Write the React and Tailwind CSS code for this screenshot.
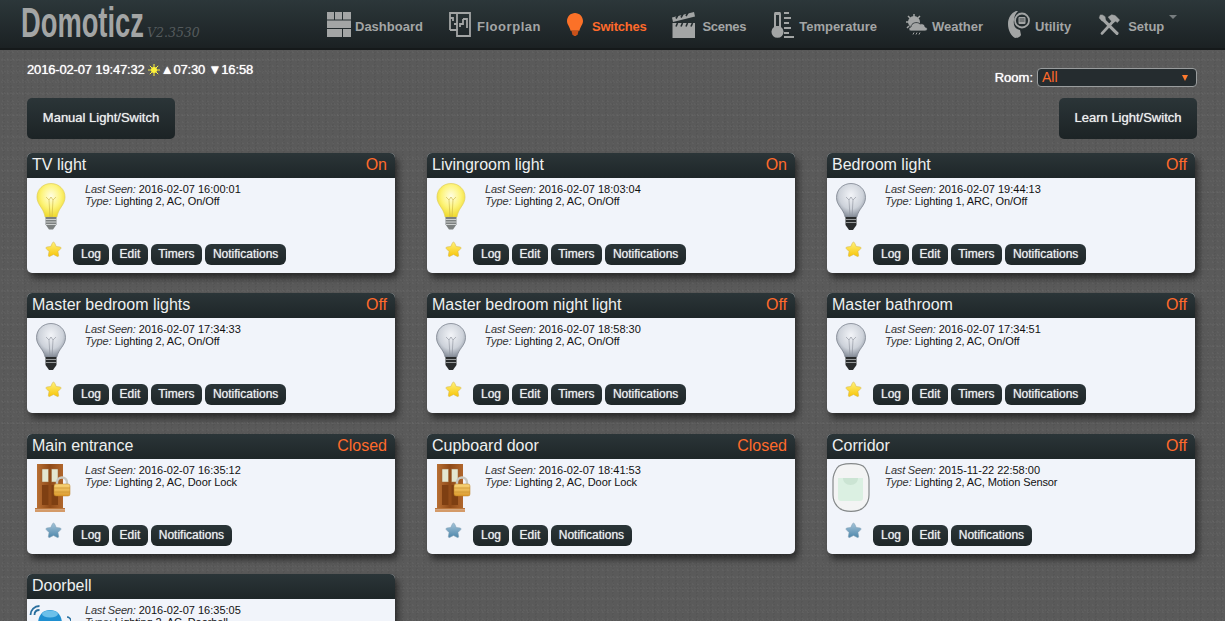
import React from "react";

const grey = "#a3a5a5";

// nav icons, drawn to match the png sprites of the original
const DashboardIcon = () => (
  <svg width="24" height="25" viewBox="0 0 24 25" fill={grey}>
    <rect x="0" y="0" width="7" height="7.5" />
    <rect x="8" y="0" width="7" height="7.5" />
    <rect x="16" y="0" width="8" height="7.5" />
    <rect x="0" y="8.5" width="24" height="7.5" />
    <rect x="0" y="17" width="15" height="8" />
    <rect x="16" y="17" width="8" height="8" />
  </svg>
);

const FloorplanIcon = () => (
  <svg width="22" height="25" viewBox="0 0 22 25" fill="none" stroke={grey} strokeWidth="1.8">
    <path d="M1 18V1h20v23H8v-6H1" />
    <path d="M1 6h3v3M8 1v11H5M8 18v-5M14 7h4v9M14 7v5h-3v3" />
  </svg>
);

const SwitchesIcon = () => (
  <svg className="mx-px" width="16" height="25" viewBox="0 0 18 26">
    <path d="M9 0c5 0 9 4 9 9 0 4-3 6-4 11H4C3 15 0 13 0 9c0-5 4-9 9-9z" fill="#fb7128" />
    <path d="M5 20h8l-1 4-2 2H8l-2-2z" fill="#c9511a" />
  </svg>
);

const ScenesIcon = () => (
  <svg width="25" height="27" viewBox="0 0 25 27" fill={grey}>
    <path d="M1 6.500 23 1l1 4.500L2 11z" />
    <path d="M1.500 12H24v15H1.500z" />
    <path d="M5 7.500 7 4M10 6.500l2-3.500M15 5l2-3.500" stroke="#232b2e" strokeWidth="1.600" />
    <path d="M5 15.500 6.500 12M10 15.500l1.500-3.500M15 15.500l1.500-3.500M20 15.500l1.500-3.500" stroke="#232b2e" strokeWidth="1.600" />
  </svg>
);

const TemperatureIcon = () => (
  <svg width="24" height="26" viewBox="0 0 24 26" fill={grey}>
    <path fillRule="evenodd" d="M3 2.500a3.500 3.500 0 0 1 7 0v12.500a6 6 0 1 1-7 0zM5 3v11h3V3z" />
    <rect x="13" y="0" width="5" height="2" />
    <rect x="13" y="5" width="7" height="2" />
    <rect x="13" y="10" width="5" height="2" />
    <rect x="13" y="15" width="7" height="2" />
    <rect x="13" y="20" width="5" height="2" />
    <rect x="13" y="24" width="10" height="2" />
  </svg>
);

const WeatherIcon = () => (
  <svg width="23" height="21" viewBox="0 0 23 21" fill={grey}>
    <circle cx="9" cy="8" r="6" />
    <path d="M9 0v3M1 8h3M3 2l2 2M15 2l-2 2M2 14l2-2" stroke={grey} strokeWidth="1.500" />
    <path d="M6 17c-2.500 0-3-4 0-4 0-4 6-6 9-3 3-1 5 1 5 3 3 0 3 4 0 4z" stroke="#232b2e" strokeWidth="0.800" />
    <path d="M9 18.500l-1 2M12 18.500l-1 2M15 18.500l-1 2" stroke={grey} strokeWidth="1" />
  </svg>
);

const UtilityIcon = () => (
  <svg width="22" height="27" viewBox="0 0 22 27" fill={grey}>
    <path d="M8 0C3 2 0 7 0 13c0 6 3 12 7 14 3 0 5-1 6-3l-1-5C7 18 5 14 6 9c0-4 2-7 4-9z" />
    <circle cx="14" cy="9.500" r="7" fill="none" stroke={grey} strokeWidth="1.800" />
    <rect x="10.500" y="6" width="7" height="7" rx="1" />
    <path d="M11.500 8h5M11.500 10h5" stroke="#232b2e" strokeWidth="0.800" />
  </svg>
);

const SetupIcon = () => (
  <svg width="25" height="22" viewBox="0 0 25 25" fill="none" stroke={grey}>
    <path d="M5 6 21 22" strokeWidth="3.600" strokeLinecap="round" />
    <path d="M4.500 1 2 1 .8 4.500 4 8l4-1-.500-4z" fill={grey} strokeWidth="0.500" />
    <path d="M4 22 17 8" strokeWidth="3.200" strokeLinecap="round" />
    <path d="M11 3.500 15 .8l4 1 5 5-2.500 3-2-1.500-3 1.500-3-3z" fill={grey} strokeWidth="0.500" />
  </svg>
);

const navItems = [
  { label: "Dashboard", icon: <DashboardIcon />, cls: "gap-[4px] mr-px" },
  { label: "Floorplan", icon: <FloorplanIcon />, cls: "gap-[6px]", text: "tracking-[0.55px]" },
  { label: "Switches", icon: <SwitchesIcon />, cls: "gap-[8px]", text: "tracking-[-0.25px]", active: true },
  { label: "Scenes", icon: <ScenesIcon />, cls: "gap-[6px]", text: "tracking-[-0.3px]" },
  { label: "Temperature", icon: <TemperatureIcon />, cls: "gap-[4px] mr-[3px]" },
  { label: "Weather", icon: <WeatherIcon />, cls: "gap-[4px]" },
  { label: "Utility", icon: <UtilityIcon />, cls: "gap-[5px] mr-px" },
  { label: "Setup", icon: <SetupIcon />, cls: "gap-[6px]" },
];

// device pictures
const BulbOn = ({ id }) => (
  <svg width="30" height="48" viewBox="0 0 30 48">
    <defs>
      <radialGradient id={id} cx="50%" cy="38%" r="62%">
        <stop offset="0%" stopColor="#fffee4" />
        <stop offset="55%" stopColor="#fdf47c" />
        <stop offset="100%" stopColor="#efd92a" />
      </radialGradient>
    </defs>
    <path d="M15 .5C7 .5 1 6.500 1 14c0 7 5 10 7 16 .5 1.500 1 3 1 4h12c0-1 .5-2.500 1-4 2-6 7-9 7-16C29 6.500 23 .5 15 .5z" fill={`url(#${id})`} stroke="#e0ce5a" strokeWidth="0.700" />
    <path d="M10 14l3 3 2-3 2 3 3-3M13 17l1 17M17 17l-1 17" fill="none" stroke="#c9b244" strokeWidth="0.600" />
    <path d="M9.500 34h11v7.500L17 46.500h-4l-3.500-5z" fill="#7c8080" />
    <path d="M9.500 36.500h11M9.500 39h11M10 41.500h10" stroke="#d6d8d8" strokeWidth="0.900" />
  </svg>
);

const BulbOff = ({ id }) => (
  <svg width="30" height="48" viewBox="0 0 30 48">
    <defs>
      <radialGradient id={id} cx="50%" cy="35%" r="68%">
        <stop offset="0%" stopColor="#f2f4f8" />
        <stop offset="60%" stopColor="#cdd2da" />
        <stop offset="100%" stopColor="#7c8490" />
      </radialGradient>
    </defs>
    <path d="M15 .5C7 .5 .5 6.500 .5 14.500c0 7 5 10 7.500 16 .5 1.500 1 3 1 3.500h12c0-.5.5-2 1-3.500 2.500-6 7.500-9 7.500-16C29.500 6.500 23 .5 15 .5z" fill={`url(#${id})`} stroke="#7f8590" strokeWidth="0.800" />
    <path d="M10 14l3 3 2-3 2 3 3-3M13 17l1 17M17 17l-1 17" fill="none" stroke="#8a8f98" strokeWidth="0.600" />
    <path d="M9.500 34h11v8L17 47h-4l-3.500-5z" fill="#2a2c2d" />
    <path d="M9.500 36.500h11M9.500 39.500h11" stroke="#a5a8a9" strokeWidth="0.900" />
  </svg>
);

const DoorLock = ({ id }) => (
  <svg width="36" height="48" viewBox="0 0 36 48">
    <defs>
      <linearGradient id={id} x1="0" y1="0" x2="0" y2="1">
        <stop offset="0%" stopColor="#f9d67c" />
        <stop offset="100%" stopColor="#dc9a2c" />
      </linearGradient>
      <linearGradient id={`${id}-door`} x1="0" y1="0" x2="1" y2="0">
        <stop offset="0%" stopColor="#b86f33" />
        <stop offset="50%" stopColor="#8f4a18" />
        <stop offset="100%" stopColor="#b0662c" />
      </linearGradient>
    </defs>
    <rect x="2" y="0" width="26" height="45" fill={`url(#${id}-door)`} />
    <rect x="7" y="5" width="6.500" height="13" fill="#e3e7d0" stroke="#9a6a3c" strokeWidth="0.500" />
    <rect x="16.500" y="5" width="6.500" height="13" fill="#e3e7d0" stroke="#9a6a3c" strokeWidth="0.500" />
    <rect x="7" y="21" width="6.500" height="20" fill="#7e3f12" />
    <rect x="16.500" y="21" width="6.500" height="20" fill="#7e3f12" />
    <rect x="0" y="44" width="30" height="1.500" fill="#b9753c" />
    <rect x="0" y="45.500" width="30" height="2.500" fill="#d49a68" />
    <path d="M22 21v-2.500a5 5 0 0 1 10 0V21" fill="none" stroke="#c9c9c2" strokeWidth="2.400" />
    <rect x="19" y="20" width="16" height="12" rx="2" fill={`url(#${id})`} stroke="#b97f22" strokeWidth="0.500" />
    <path d="M19 24h16M19 28h16" stroke="#cc9430" strokeWidth="0.800" />
  </svg>
);

const MotionSensor = () => (
  <svg className="-mt-px" width="38" height="49" viewBox="0 0 38 49">
    <path d="M19 .7C12 .7 7 2 5 5 2.500 9 1 13 1 17v15c0 4 1.500 8 4 11 3 4 8 5.300 14 5.300S30 47 33 43c2.500-3 4-7 4-11V17c0-4-1.500-8-4-12C31 2 26 .7 19 .7z" fill="#f3f4f4" stroke="#85898a" strokeWidth="1.200" />
    <path d="M6 15h25v20c0 2-1 3-3 3H9c-2 0-3-1-3-3z" fill="#dbf0e2" />
    <path d="M11 15h15c0 4-3 7-7.500 7S11 19 11 15z" fill="#cbe4d3" />
  </svg>
);

const DoorbellIcon = () => (
  <svg width="44" height="48" viewBox="0 0 44 48">
    <path d="M3.500 11c0-5 4-9 9-9M7.500 11c0-3 2-5 5-5" fill="none" stroke="#2a6f9e" strokeWidth="1.800" />
    <path d="M11 20c0-9 5-14 12-14s12 5 12 14v14H11z" fill="#1f8fd0" />
    <ellipse cx="23" cy="10" rx="8" ry="3.500" fill="#6cc0ea" />
    <path d="M40 13c2 0 4 2 4 4" fill="none" stroke="#2a6f9e" strokeWidth="1.600" />
  </svg>
);

const Star = ({ blue, id }) => (
  <svg width="17" height="17" viewBox="0 0 18 18">
    <defs>
      <linearGradient id={id} x1="0" y1="0" x2="0" y2="1">
        {blue ? <stop offset="0%" stopColor="#a3c3d8" /> : <stop offset="0%" stopColor="#fff27a" />}
        {blue ? <stop offset="100%" stopColor="#4f87ab" /> : <stop offset="100%" stopColor="#f7c50a" />}
      </linearGradient>
    </defs>
    <path d="M9 1.200c.6 0 .9.400 1.200 1l1.700 3.600 3.900.5c1.200.2 1.500 1.200.7 2l-2.800 2.800.7 3.900c.2 1.200-.7 1.800-1.700 1.200L9 14.300l-3.700 1.900c-1 .6-1.900 0-1.700-1.200l.7-3.900L1.500 8.300c-.8-.8-.5-1.800.7-2l3.900-.5 1.700-3.600c.3-.6.6-1 1.200-1z" fill={`url(#${id})`} stroke={blue ? "#7f9fb5" : "#d8b84a"} strokeWidth="0.600" />
  </svg>
);

const switches = [
  { name: "TV light", status: "On", seen: "2016-02-07 16:00:01", type: "Lighting 2, AC, On/Off", icon: "on", timers: true },
  { name: "Livingroom light", status: "On", seen: "2016-02-07 18:03:04", type: "Lighting 2, AC, On/Off", icon: "on", timers: true },
  { name: "Bedroom light", status: "Off", seen: "2016-02-07 19:44:13", type: "Lighting 1, ARC, On/Off", icon: "off", timers: true },
  { name: "Master bedroom lights", status: "Off", seen: "2016-02-07 17:34:33", type: "Lighting 2, AC, On/Off", icon: "off", timers: true },
  { name: "Master bedroom night light", status: "Off", seen: "2016-02-07 18:58:30", type: "Lighting 2, AC, On/Off", icon: "off", timers: true },
  { name: "Master bathroom", status: "Off", seen: "2016-02-07 17:34:51", type: "Lighting 2, AC, On/Off", icon: "off", timers: true },
  { name: "Main entrance", status: "Closed", seen: "2016-02-07 16:35:12", type: "Lighting 2, AC, Door Lock", icon: "door" },
  { name: "Cupboard door", status: "Closed", seen: "2016-02-07 18:41:53", type: "Lighting 2, AC, Door Lock", icon: "door" },
  { name: "Corridor", status: "Off", seen: "2015-11-22 22:58:00", type: "Lighting 2, AC, Motion Sensor", icon: "motion" },
  { name: "Doorbell", status: "", seen: "2016-02-07 16:35:05", type: "Lighting 2, AC, Doorbell", icon: "bell" },
];

const DeviceIcon = ({ kind, id }) => {
  if (kind === "on") return <div className="pl-[9px]"><BulbOn id={id} /></div>;
  if (kind === "off") return <div className="pl-[9px]"><BulbOff id={id} /></div>;
  if (kind === "door") return <div className="pl-[8px]"><DoorLock id={id} /></div>;
  if (kind === "motion") return <div className="pl-[5px]"><MotionSensor /></div>;
  return <DoorbellIcon />;
};

const ActionButton = ({ children, tight }) => (
  <button className={`h-[21px] rounded-[6px] bg-gradient-to-b from-[#2b3538] to-[#1e2628] text-[12px] leading-[21px] text-[#eceff0] [text-shadow:0_0_1px_#c8cccc] ${tight ? "px-[7.5px]" : "px-[8px]"}`}>
    {children}
  </button>
);

const SwitchCard = ({ item, index }) => {
  const isLight = item.icon === "on" || item.icon === "off";
  return (
    <div className="h-[120px] self-start overflow-hidden rounded-[5px] bg-[#f1f4fa] shadow-[3px_5px_7px_rgba(0,0,0,0.55)]">
      <div className="flex h-[25px] items-center justify-between bg-gradient-to-b from-[#2b3538] to-[#1e2628] pb-[2px] pl-[5px] pr-[8px] text-[16px] text-[#eef0f0]">
        <span>{item.name}</span>
        <span className="text-[#ff6a2b]">{item.status}</span>
      </div>
      <div className="flex h-[66px]">
        <div className="h-full w-[58px] pt-[5px]">
          <DeviceIcon kind={item.icon} id={`icon-${index}`} />
        </div>
        <div className="pt-[5px] text-[11px] leading-[12px] text-[#111]">
          <div><em className="tracking-[-0.2px] text-[#333]">Last Seen:</em> {item.seen}</div>
          <div><em className="text-[#333]">Type:</em> <span className="tracking-[-0.1px]">{item.type}</span></div>
        </div>
      </div>
      <div className="flex items-start">
        <div className="-mt-[3px] w-[46px] pl-[18px]">
          <Star blue={!isLight} id={`star-${index}`} />
        </div>
        <div className="flex gap-[3px]">
          <ActionButton>Log</ActionButton>
          <ActionButton tight>Edit</ActionButton>
          {item.timers && <ActionButton tight>Timers</ActionButton>}
          <ActionButton>Notifications</ActionButton>
        </div>
      </div>
    </div>
  );
};

const LargeButton = ({ children, className }) => (
  <button className={`h-[41px] rounded-[5px] bg-gradient-to-b from-[#2b3538] to-[#1c2325] pb-[2px] text-[13px] text-[#eef0f0] [text-shadow:0_0_1px_#c8cccc] ${className}`}>
    {children}
  </button>
);

export default function App() {
  return (
    <div className="h-screen overflow-hidden bg-[#5a5a5a] bg-[radial-gradient(circle,rgba(255,255,255,0.035)_1px,transparent_1px),radial-gradient(circle,rgba(0,0,0,0.045)_1px,transparent_1px),radial-gradient(circle,rgba(255,255,255,0.03)_1px,transparent_1px)] bg-[length:5px_7px,7px_3px,3px_11px] font-['Liberation_Sans',Arial,sans-serif]">
      <header className="flex h-[50px] items-start border-b-2 border-[#15191a] bg-gradient-to-b from-[#2c373a] to-[#1b2123] pl-[21px]">
        <div className="flex w-[306px] items-start pt-[1px]">
          <span className="w-[126px] origin-left scale-x-[0.65] whitespace-nowrap text-[42px] font-bold leading-[44px] text-[#a3a5a5]">Domoticz</span>
          <span className="pt-[24px] font-['DejaVu_Serif',serif] text-[12.5px] italic leading-[16px] text-[#555b5d]">V2.3530</span>
        </div>
        <nav className="flex h-[49px] items-center gap-[25px]">
          {navItems.map((item) => (
            <a key={item.label} className={`relative flex items-center ${item.cls}`}>
              {item.icon}
              <span className={`mt-[4px] text-[13px] font-bold ${item.text || ""} ${item.active ? "text-[#ff6a2b]" : "text-[#a3a5a5]"}`}>{item.label}</span>
              {item.label === "Setup" && (
                <span className="absolute left-[72px] top-[2px] h-0 w-0 border-x-[4px] border-t-[4px] border-x-transparent border-t-[#777d7f]" />
              )}
            </a>
          ))}
        </nav>
      </header>

      <main className="pl-[27px] pr-[28px]">
        <div className="flex h-[48px] items-start justify-between">
          <div className="flex items-center pt-[10px] text-[13px] tracking-[-0.16px] text-white [text-shadow:0_0_1px_#fff]">
            <span>2016-02-07 19:47:32</span>
            <svg className="ml-[3px] mr-[1px]" width="12" height="12" viewBox="0 0 12 12" fill="#fdf23a">
              <circle cx="6" cy="6" r="3" />
              <path d="M6 0v12M0 6h12M1.800 1.800l8.400 8.400M10.200 1.800l-8.400 8.400" stroke="#fdf23a" strokeWidth="1" />
            </svg>
            <span>▲07:30 ▼16:58</span>
          </div>
          <div className="flex items-center gap-[4px] pt-[18px]">
            <span className="text-[13px] text-white [text-shadow:0_0_1px_#fff]">Room:</span>
            <div className="flex h-[19px] w-[160px] items-center justify-between rounded-[4px] border border-[#9a9d9e] bg-[#252c2f] pl-[4px] pr-[8px] text-[14px] text-[#ff6a2b]">
              <span>All</span>
              <span className="h-0 w-0 border-x-[3px] border-t-[6px] border-x-transparent border-t-[#ff7a2e]" />
            </div>
          </div>
        </div>

        <div className="flex h-[55px] items-start justify-between">
          <LargeButton className="w-[148px]">Manual Light/Switch</LargeButton>
          <LargeButton className="w-[138px]">Learn Light/Switch</LargeButton>
        </div>

        <div className="grid grid-cols-[368px_368px_368px] grid-rows-[120px_121px_120px_120px] gap-x-8 gap-y-5">
          {switches.map((item, i) => (
            <SwitchCard key={item.name} item={item} index={i} />
          ))}
        </div>
      </main>
    </div>
  );
}
